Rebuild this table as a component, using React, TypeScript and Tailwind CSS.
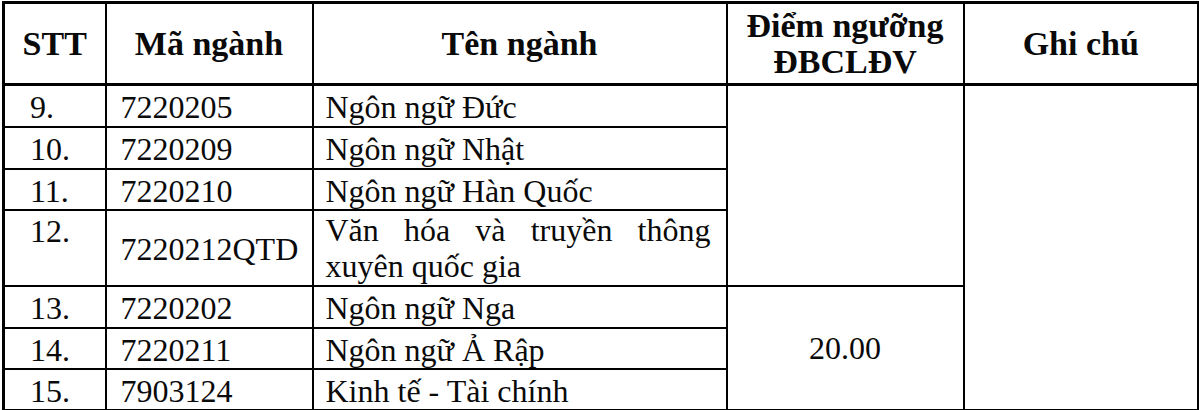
const rows = [
  { stt: "9.", code: "7220205", name: "Ngôn ngữ Đức", h: "h-[42px]" },
  { stt: "10.", code: "7220209", name: "Ngôn ngữ Nhật", h: "h-[42px]" },
  { stt: "11.", code: "7220210", name: "Ngôn ngữ Hàn Quốc", h: "h-[41px]" },
  {
    stt: "12.",
    code: "7220212QTD",
    name: "Văn hóa và truyền thông xuyên quốc gia",
    h: "h-[76px]",
  },
  { stt: "13.", code: "7220202", name: "Ngôn ngữ Nga", h: "h-[42px]" },
  { stt: "14.", code: "7220211", name: "Ngôn ngữ Ả Rập", h: "h-[41px]" },
  { stt: "15.", code: "7903124", name: "Kinh tế - Tài chính", h: "h-[40px]" },
];

// font set per cell: tables don't always inherit it from the wrapper
const cell =
  "border-2 border-black p-0 [font-family:'Liberation_Serif',serif] text-[32px] leading-[36px] text-[#0a0a0a]";
const head = `${cell} border-b-[3px] text-center align-middle font-bold text-[34px]`;

export default function App() {
  return (
    <div className="bg-white pl-[2px] pt-[1px]">
      <table className="w-[1195px] table-fixed border-collapse border-[3px] border-black">
        <colgroup>
          <col className="w-[102px]" />
          <col className="w-[207px]" />
          <col className="w-[414px]" />
          <col className="w-[237px]" />
          <col className="w-[235px]" />
        </colgroup>
        <thead>
          <tr className="h-[82px]">
            <th className={head}>STT</th>
            <th className={head}>Mã ngành</th>
            <th className={head}>Tên ngành</th>
            <th className={head}>
              Điểm ngưỡng
              <br />
              ĐBCLĐV
            </th>
            <th className={head}>Ghi chú</th>
          </tr>
        </thead>
        <tbody>
          {rows.map((r, i) => {
            const tall = r.stt === "12.";
            return (
              <tr key={r.stt} className={r.h}>
                <td
                  className={`${cell} pl-[25px] ${tall ? "pt-[2px] align-top" : "pt-[3px] align-middle"}`}
                >
                  {r.stt}
                </td>
                <td className={`${cell} pl-[14px] pt-[3px] align-middle`}>{r.code}</td>
                <td
                  className={`${cell} pl-[12px] pr-[15px] align-middle ${tall ? "pt-0 text-justify" : "pt-[3px]"}`}
                >
                  {r.name}
                </td>
                {i === 0 ? <td className={cell} rowSpan={4} /> : null}
                {i === 4 ? (
                  <td className={`${cell} text-center align-middle`} rowSpan={3}>
                    20.00
                  </td>
                ) : null}
                {i === 0 ? <td className={cell} rowSpan={7} /> : null}
              </tr>
            );
          })}
        </tbody>
      </table>
    </div>
  );
}
